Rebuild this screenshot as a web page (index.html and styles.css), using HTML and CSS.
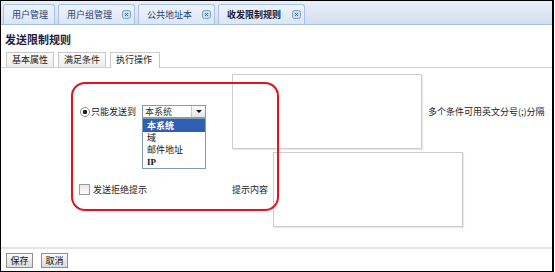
FILE: index.html
```html
<!DOCTYPE html>
<html lang="zh-CN">

<head>
    <meta charset="UTF-8" />
    <title>发送限制规则</title>
    <link rel="stylesheet" href="styles.css">
</head>

<body>
    <div class="frame">
        <!-- top tabs -->
        <div class="tabbar">
            <div class="tab tab-a">用户管理</div>
            <div class="tab tab-b">用户组管理
                <svg class="close" width="9" height="9" viewBox="0 0 9 9"><rect x="0.5" y="0.5" width="8" height="8" rx="2" fill="#c9daf1" stroke="#7fa2d3"/><path d="M3 3 L6 6 M6 3 L3 6" stroke="#3a6ab0" stroke-width="1"/></svg>
            </div>
            <div class="tab tab-b">公共地址本
                <svg class="close" width="9" height="9" viewBox="0 0 9 9"><rect x="0.5" y="0.5" width="8" height="8" rx="2" fill="#c9daf1" stroke="#7fa2d3"/><path d="M3 3 L6 6 M6 3 L3 6" stroke="#3a6ab0" stroke-width="1"/></svg>
            </div>
            <div class="tab tab-c active">收发限制规则
                <svg class="close" width="9" height="9" viewBox="0 0 9 9"><rect x="0.5" y="0.5" width="8" height="8" rx="2" fill="#c9daf1" stroke="#7fa2d3"/><path d="M3 3 L6 6 M6 3 L3 6" stroke="#3a6ab0" stroke-width="1"/></svg>
            </div>
        </div>

        <div class="title">发送限制规则</div>

        <div class="subtabs">
            <div class="subtab">基本属性</div>
            <div class="subtab">满足条件</div>
            <div class="subtab active">执行操作</div>
        </div>

        <div class="content">
            <div class="row row-top">
                <div class="opt">
                    <span class="radio"></span>
                    <span class="lbl">只能发送到</span>
                    <div class="select">
                        <span class="select-value">本系统</span>
                        <span class="select-arrow"></span>
                        <ul class="select-list">
                            <li class="sel">本系统</li>
                            <li>域</li>
                            <li>邮件地址</li>
                            <li class="ip">IP</li>
                        </ul>
                    </div>
                </div>
                <textarea class="box"></textarea>
                <span class="note">多个条件可用英文分号(;)分隔</span>
            </div>
            <div class="row row-bottom">
                <div class="opt">
                    <span class="check"></span>
                    <span class="lbl2">发送拒绝提示</span>
                </div>
                <span class="hint">提示内容</span>
                <textarea class="box"></textarea>
            </div>
            <div class="mark"></div>
        </div>

        <div class="footer">
            <button class="btn">保存</button>
            <button class="btn">取消</button>
        </div>
    </div>
</body>

</html>
```

FILE: styles.css
```css
* {
    box-sizing: border-box;
}

body {
    margin: 0;
    font-family: "Noto Sans CJK SC", "Liberation Sans", sans-serif;
    font-size: 9px;
    color: #222;
    background-color: #fff;
}

.frame {
    width: 554px;
    height: 272px;
    border: 1px solid #000;
    border-right-width: 2px;
    display: flex;
    flex-direction: column;
    overflow: hidden;
}

/* top tab bar */
.tabbar {
    height: 24px;
    flex: none;
    display: flex;
    align-items: flex-end;
    gap: 3px;
    padding-left: 2px;
    background: linear-gradient(#e9eff8, #d3dff0);
    border-bottom: 1px solid #a6bfe0;
}

.tab {
    height: 20px;
    display: flex;
    align-items: center;
    padding: 0 3px 0 8px;
    border: 1px solid #a9c1e2;
    border-bottom: none;
    border-radius: 3px 3px 0 0;
    background: linear-gradient(#eff4fb, #dae6f5);
    color: #1c3f7a;
    white-space: nowrap;
}

.tab-a {
    width: 52px;
}

.tab-b {
    width: 77px;
}

.tab-c {
    width: 87px;
}

.tab.active {
    font-weight: bold;
    color: #1a1a3a;
}

.close {
    margin-left: auto;
}

/* page title */
.title {
    height: 26px;
    flex: none;
    padding: 3px 0 0 4px;
    line-height: 23px;
    font-size: 11px;
    font-weight: bold;
    color: #1d1d3d;
}

/* inner tabs */
.subtabs {
    height: 17px;
    flex: none;
    display: flex;
    align-items: flex-end;
    gap: 4px;
    padding-left: 5px;
    border-bottom: 1px solid #d0d0d0;
}

.subtab {
    width: 48px;
    height: 15px;
    padding-left: 5px;
    line-height: 13px;
    border: 1px solid #c9c9c9;
    border-bottom: none;
    background: linear-gradient(#fbfbfb, #ececec);
    color: #222;
}

.subtab.active {
    width: 50px;
    height: 16px;
    margin-bottom: -1px;
    background: #fff;
}

/* form area */
.content {
    flex: 1;
    position: relative;
    padding-top: 6px;
    border-bottom: 2px solid #e4e4e4;
}

.row {
    height: 75px;
    display: flex;
    align-items: center;
}

.row-top {
    padding-left: 79px;
}

.row-bottom {
    margin-top: 3px;
    padding-left: 78px;
}

.opt {
    display: flex;
    align-items: center;
    flex: none;
}

.row-top .opt {
    width: 152px;
}

.row-bottom .opt {
    width: 153px;
}

.radio {
    width: 10px;
    height: 10px;
    border: 1px solid #8a8a8a;
    border-radius: 50%;
    background: radial-gradient(circle, #222 0 2px, #fff 2.5px);
}

.lbl {
    margin-left: 1px;
}

.select {
    position: relative;
    width: 64px;
    height: 13px;
    margin-left: 6px;
    display: flex;
    border: 1px solid #7f9db9;
    background: #fff;
}

.select-value {
    flex: 1;
    padding-left: 2px;
    line-height: 11px;
    color: #333;
}

.select-arrow {
    width: 14px;
    border-left: 1px solid #b8c6d6;
    background: linear-gradient(#fdfdfd, #e6e6e6);
    position: relative;
}

.select-arrow::after {
    content: "";
    position: absolute;
    left: 4px;
    top: 4px;
    border-left: 3px solid transparent;
    border-right: 3px solid transparent;
    border-top: 3px solid #111;
}

.select-list {
    position: absolute;
    left: -1px;
    top: 12px;
    width: 64px;
    margin: 0;
    padding: 0;
    list-style: none;
    border: 1px solid #7f9db9;
    background: #fff;
}

.select-list li {
    height: 12px;
    line-height: 12px;
    padding-left: 4px;
    color: #111;
}

.select-list li.sel {
    height: 13px;
    line-height: 13px;
    background-color: #2f5fb3;
    color: #fff;
    font-weight: bold;
}

.select-list li.ip {
    font-family: "Liberation Serif", serif;
    font-weight: bold;
}

.box {
    width: 190px;
    height: 75px;
    flex: none;
    margin: 0;
    resize: none;
    border: 1px solid #cdcdcd;
    box-shadow: 1px 1px 1px #e8e8e8;
    background: #fff;
}

.note {
    margin-left: 6px;
    white-space: nowrap;
    color: #222;
}

.check {
    width: 11px;
    height: 11px;
    border: 1px solid #9a9a9a;
    background: linear-gradient(#e8e8e8, #fdfdfd);
}

.lbl2 {
    margin-left: 3px;
}

.hint {
    width: 41px;
    flex: none;
}

/* red annotation ring */
.mark {
    position: absolute;
    left: 70px;
    top: 14px;
    width: 208px;
    height: 129px;
    border: 2px solid #e3121d;
    border-radius: 14px;
}

/* bottom buttons */
.footer {
    height: 22px;
    flex: none;
    display: flex;
    align-items: center;
    gap: 8px;
    padding-left: 5px;
}

.btn {
    width: 27px;
    height: 15px;
    padding: 0;
    font-family: "Noto Sans CJK SC", sans-serif;
    font-size: 9px;
    line-height: 13px;
    color: #111;
    border: 1px solid #8f8f8f;
    border-radius: 0;
    background: linear-gradient(#fbfbfb, #dadada);
}
```
